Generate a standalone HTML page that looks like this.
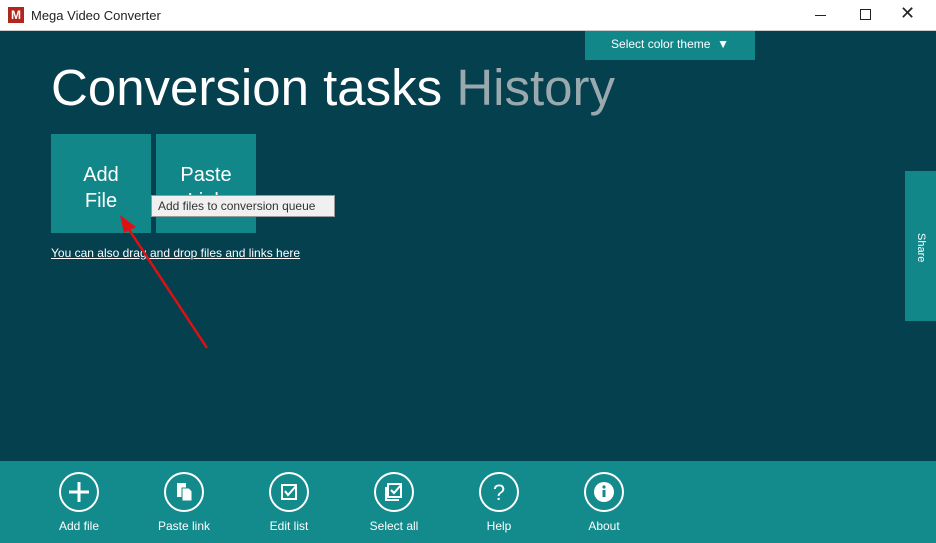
<!DOCTYPE html><html><head><style>
body{margin:0;width:936px;height:543px;overflow:hidden;font-family:"Liberation Sans",sans-serif;position:relative;background:#05404f}
.tb{position:absolute;left:0;top:0;width:936px;height:31px;background:#fff;border-bottom:1px solid #ccc;box-sizing:border-box}
.abs{position:absolute}
.tile{position:absolute;top:134px;width:100px;height:99px;background:#12878a;color:#fff;font-size:20px;text-align:center;line-height:26px;box-sizing:border-box;padding-top:28px}
.bar{position:absolute;left:0;top:461px;width:936px;height:82px;background:#138a8c}
.it{position:absolute;top:10px;width:80px;text-align:center;color:#fff;font-size:12px}
.it svg{display:block;margin:0 auto 6px}
</style></head><body>
<div class="tb">
<div class="abs" style="left:8px;top:7px;width:16px;height:16px;background:#b3261e;color:#fff;font-size:12px;font-weight:bold;text-align:center;line-height:16px">M</div>
<div class="abs" style="left:31px;top:8px;font-size:13px;color:#222">Mega Video Converter</div>
<div class="abs" style="left:815px;top:15px;width:11px;height:1px;background:#222"></div>
<div class="abs" style="left:860px;top:9px;width:9px;height:9px;border:1px solid #222"></div>
<div class="abs" style="left:900px;top:3px;font-size:18px;color:#222">✕</div>
</div>
<div class="abs" style="left:585px;top:31px;width:170px;height:29px;background:#12878a;color:#fff;font-size:12px;text-align:center;line-height:26px">Select color theme &nbsp;▼</div>
<div class="abs" style="left:51px;top:58px;font-size:51px;color:#fff;letter-spacing:0;white-space:nowrap">Conversion tasks <span style="color:#9aa9ad">History</span></div>
<div class="tile" style="left:51px">Add<br>File</div>
<div class="tile" style="left:156px">Paste<br>Link</div>
<div class="abs" style="left:151px;top:195px;width:184px;height:22px;background:#f0f0f0;border:1px solid #999;box-sizing:border-box;font-size:12px;color:#333;line-height:20px;padding-left:6px">Add files to conversion queue</div>
<div class="abs" style="left:51px;top:246px;font-size:12px;color:#fff;text-decoration:underline">You can also drag and drop files and links here</div>
<svg class="abs" style="left:110px;top:205px" width="110" height="150"><line x1="97" y1="143" x2="16" y2="20" stroke="#d11" stroke-width="2.5"/><polygon points="10,10 26,22 14,28" fill="#d11"/></svg>
<div class="abs" style="left:905px;top:171px;width:31px;height:150px;background:#12878a"><div style="position:absolute;transform:rotate(90deg);transform-origin:0 0;left:22px;top:62px;color:#fff;font-size:11px">Share</div></div>
<div class="bar">
<div class="it" style="left:39px"><svg width="42" height="42"><circle cx="21" cy="21" r="19" fill="none" stroke="#fff" stroke-width="2"/><path d="M21 11v20M11 21h20" stroke="#fff" stroke-width="3"/></svg>Add file</div>
<div class="it" style="left:144px"><svg width="42" height="42"><circle cx="21" cy="21" r="19" fill="none" stroke="#fff" stroke-width="2"/><rect x="14" y="12" width="9" height="14" fill="#fff"/><path d="M19 17h7l3 3v10h-10z" fill="#fff" stroke="#138a8c"/></svg>Paste link</div>
<div class="it" style="left:249px"><svg width="42" height="42"><circle cx="21" cy="21" r="19" fill="none" stroke="#fff" stroke-width="2"/><rect x="14" y="14" width="14" height="14" fill="none" stroke="#fff" stroke-width="2"/><path d="M17 20l3 4 8-9" stroke="#fff" stroke-width="2" fill="none"/></svg>Edit list</div>
<div class="it" style="left:354px"><svg width="42" height="42"><circle cx="21" cy="21" r="19" fill="none" stroke="#fff" stroke-width="2"/><rect x="15" y="13" width="13" height="13" fill="none" stroke="#fff" stroke-width="2"/><path d="M13 16v13h13" stroke="#fff" stroke-width="2" fill="none"/><path d="M18 19l3 3 7-8" stroke="#fff" stroke-width="2" fill="none"/></svg>Select all</div>
<div class="it" style="left:459px"><svg width="42" height="42"><circle cx="21" cy="21" r="19" fill="none" stroke="#fff" stroke-width="2"/><text x="21" y="29" text-anchor="middle" fill="#fff" font-size="22" font-family="Liberation Sans">?</text></svg>Help</div>
<div class="it" style="left:564px"><svg width="42" height="42"><circle cx="21" cy="21" r="19" fill="none" stroke="#fff" stroke-width="2"/><circle cx="21" cy="21" r="10" fill="#fff"/><rect x="19.5" y="19" width="3" height="7" fill="#138a8c"/><circle cx="21" cy="16" r="1.6" fill="#138a8c"/></svg>About</div>
</div>
</body></html>
